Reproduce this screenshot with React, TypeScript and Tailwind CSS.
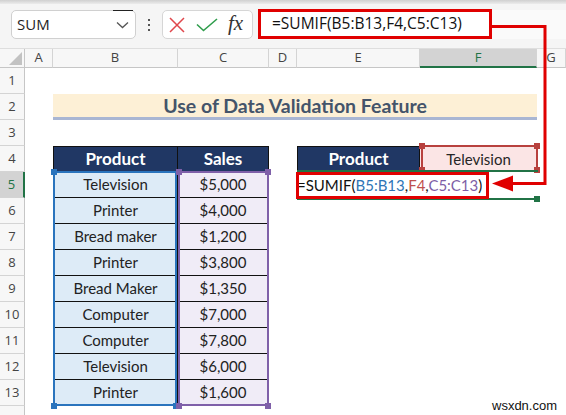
import React from "react";

const products = [
  ["Television", "$5,000"],
  ["Printer", "$4,000"],
  ["Bread maker", "$1,200"],
  ["Printer", "$3,800"],
  ["Bread Maker", "$1,350"],
  ["Computer", "$7,000"],
  ["Computer", "$7,800"],
  ["Television", "$6,000"],
  ["Printer", "$1,600"],
];

const cellFont = { fontFamily: "Lato, 'Noto Sans', sans-serif" };
const uiFont = { fontFamily: "'Open Sans', 'Noto Sans', sans-serif" };

function RowHead({ n, active }: { n?: number; active?: boolean }) {
  return (
    <div
      className={
        "flex items-center justify-center border-b border-[#d4d4d4] text-[13px] " +
        (active
          ? "bg-[#d3d3d3] border-r-2 border-r-[#217346] text-[#217346]"
          : "bg-[#f7f7f7] border-r border-r-[#c6c6c6] text-[#444]")
      }
      style={uiFont}
    >
      {n}
    </div>
  );
}

function ColHead({ l, active }: { l: string; active?: boolean }) {
  return (
    <div
      className={
        "flex items-center justify-center border-r border-[#d4d4d4] text-[13px] " +
        (active
          ? "bg-[#d3d3d3] border-b-2 border-b-[#217346] text-[#217346]"
          : "bg-[#f7f7f7] border-b border-b-[#c6c6c6] text-[#444]")
      }
      style={uiFont}
    >
      {l}
    </div>
  );
}

function Square({ x, y, c }: { x: number; y: number; c: string }) {
  return (
    <div
      className="absolute w-[6px] h-[6px]"
      style={{ left: x - 3, top: y - 3, background: c }}
    />
  );
}

export default function App() {
  return (
    <div className="relative w-[566px] h-[415px] overflow-hidden bg-white">
      {/* top band */}
      <div className="h-[4px] bg-gradient-to-b from-[#d0d0d0] to-[#ececec]" />
      {/* formula bar */}
      <div className="h-[44px] bg-[#f5f5f5] flex items-start pt-[6px] pl-[11px]">
        <div className="relative w-[125px] h-[29px] bg-white border border-[#d0d0d0] rounded-[5px] flex items-center pl-[5px] pr-[6px]">
          <span className="text-[15px] text-[#1f1f1f]" style={uiFont}>
            SUM
          </span>
          <svg className="ml-auto" width="13" height="8" viewBox="0 0 13 8">
            <path d="M1 1.5 L6.5 6.5 L12 1.5" fill="none" stroke="#555" strokeWidth="1.3" />
          </svg>
          <div className="absolute right-[2px] top-[-1px] w-[20px] h-[1px] bg-[#222]" />
        </div>
        <div className="w-[26px] h-[29px] flex flex-col items-center justify-center gap-[3px]">
          <div className="w-[2px] h-[2px] bg-[#555]" />
          <div className="w-[2px] h-[2px] bg-[#555]" />
          <div className="w-[2px] h-[2px] bg-[#555]" />
        </div>
        <div className="w-[91px] h-[29px] bg-white border border-[#d6d6d6] rounded-[5px] flex items-center pl-[6px]">
          <svg width="16" height="16" viewBox="0 0 16 16">
            <path d="M1 1 L15 15 M15 1 L1 15" stroke="#e0474c" strokeWidth="1.5" fill="none" />
          </svg>
          <svg className="ml-[11px]" width="22" height="14" viewBox="0 0 22 14">
            <path d="M1 6.5 L7.5 12.5 L21 1" stroke="#2f9d4c" strokeWidth="1.6" fill="none" />
          </svg>
          <span
            className="ml-[10px] text-[21px] italic leading-none text-[#333] -mt-[3px]"
            style={{ fontFamily: "'Liberation Serif', serif" }}
          >
            fx
          </span>
        </div>
        <div className="ml-[5px] w-[234px] h-[30px] -mt-[1px] bg-white border-[3px] border-[#e00000] flex items-center pl-[11px]">
          <span className="text-[15.5px] text-[#111] whitespace-nowrap" style={uiFont}>
            =SUMIF(B5:B13,F4,C5:C13)
          </span>
        </div>
        <div className="flex-1 h-[29px] bg-[#fafafa]" />
      </div>

      {/* sheet grid */}
      <div
        className="grid grid-cols-[25px_28px_125px_91px_28px_123px_117px_29px] grid-rows-[19px_repeat(14,26px)] border-t border-[#dedede]"
        style={cellFont}
      >
        {/* header row */}
        <div className="relative bg-[#f7f7f7] border-r border-b border-[#c6c6c6]">
          <div
            className="absolute right-[2px] bottom-[2px] w-[13px] h-[13px] bg-[#c2c2c2]"
            style={{ clipPath: "polygon(100% 0, 100% 100%, 0 100%)" }}
          />
        </div>
        {["A", "B", "C", "D", "E", "F", "G"].map((l) => (
          <ColHead key={l} l={l} active={l === "F"} />
        ))}

        {/* row 1 */}
        <RowHead n={1} />
        <div className="col-span-7" />

        {/* row 2 */}
        <RowHead n={2} />
        <div />
        <div className="col-span-5 bg-[#fdf0d6] border-b-[3px] border-[#a9b6d3] flex items-center justify-center">
          <span className="text-[19.5px] font-bold text-[#44546a]">Use of Data Validation Feature</span>
        </div>
        <div />

        {/* row 3 */}
        <RowHead n={3} />
        <div className="col-span-7" />

        {/* row 4 */}
        <RowHead n={4} />
        <div />
        <div className="bg-[#203764] border border-[#111] flex items-center justify-center text-white font-bold text-[17px]">
          Product
        </div>
        <div className="bg-[#203764] border-y border-r border-[#111] flex items-center justify-center text-white font-bold text-[17px]">
          Sales
        </div>
        <div />
        <div className="bg-[#203764] border border-[#111] flex items-center justify-center text-white font-bold text-[17px]">
          Product
        </div>
        <div className="bg-[#fbe5e5] flex items-center justify-center text-[15px] text-[#262626]">
          Television
        </div>
        <div />

        {/* rows 5-13 */}
        {products.map(([p, s], i) => {
          const n = i + 5;
          return (
            <React.Fragment key={n}>
              <RowHead n={n} active={n === 5} />
              <div />
              <div className="bg-[#ddebf7] border-b border-x border-[#111] flex items-center justify-center text-[15px] text-[#222]">
                {p}
              </div>
              <div className="bg-[#f0ecf7] border-b border-r border-[#111] flex items-center justify-center text-[15px] text-[#222]">
                {s}
              </div>
              <div />
              <div className="relative flex items-center">
                {n === 5 && (
                  <span className="absolute left-0 whitespace-nowrap text-[15px] text-[#111]">
                    =SUMIF(<span className="text-[#2e75b6]">B5:B13</span>,
                    <span className="text-[#c0504d]">F4</span>,
                    <span className="text-[#7e5fa6]">C5:C13</span>)
                  </span>
                )}
              </div>
              <div />
              <div />
            </React.Fragment>
          );
        })}

        {/* row 14 (cut off) */}
        <RowHead />
        <div className="col-span-7" />
      </div>

      {/* selection overlays */}
      <div className="absolute left-[53px] top-[171px] w-[124px] h-[235px] border-2 border-[#2a74bd]" />
      <Square x={54} y={172} c="#2a74bd" />
      <Square x={54} y={406} c="#2a74bd" />
      <Square x={176} y={406} c="#2a74bd" />
      <div className="absolute left-[178px] top-[171px] w-[91px] h-[235px] border-2 border-[#7f60a9]" />
      <Square x={179} y={172} c="#7f60a9" />
      <Square x={268} y={172} c="#7f60a9" />
      <Square x={179} y={406} c="#7f60a9" />
      <Square x={268} y={406} c="#7f60a9" />

      {/* F4 reference */}
      <div className="absolute left-[421px] top-[145px] w-[117px] h-[27px] border-2 border-[#b8413e]" />
      <Square x={422} y={146} c="#b8413e" />
      <Square x={537} y={146} c="#b8413e" />
      <Square x={422} y={170} c="#b8413e" />
      <Square x={537} y={170} c="#b8413e" />

      {/* active cell */}
      <div className="absolute left-[297px] top-[170px] w-[241px] h-[30px] border-y-2 border-[#217346]" />
      <Square x={537} y={199} c="#217346" />

      {/* annotations */}
      <div className="absolute left-[296px] top-[172px] w-[193px] h-[27px] border-[3px] border-[#e00000]" />
      <svg className="absolute left-0 top-0" width="566" height="415" viewBox="0 0 566 415">
        <path d="M492 26.5 H545 V183.5 H510" fill="none" stroke="#e00000" strokeWidth="3" />
        <path d="M492 183.5 L513 175.5 L513 191.5 Z" fill="#e00000" />
      </svg>

      {/* watermark */}
      <div
        className="absolute left-[492px] top-[396px] text-[13px] text-[#111]"
        style={{ fontFamily: "'Liberation Sans', Arial, sans-serif" }}
      >
        wsxdn.com
      </div>
    </div>
  );
}
